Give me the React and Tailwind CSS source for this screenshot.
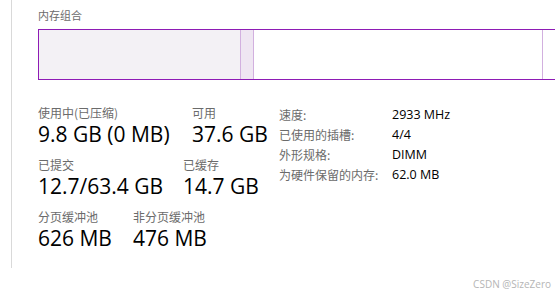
export default function App() {
  const lbl = "text-[12px] leading-[16px] text-[#6b6b6b] font-['Noto_Sans_CJK_SC',sans-serif]";
  const val = "text-[21px] leading-[26px] text-black";
  return (
    <div className="w-[555px] h-[300px] bg-white relative overflow-hidden font-['Open_Sans','Noto_Sans_CJK_SC',sans-serif]">
      <div className="absolute left-[11px] top-0 h-[268px] w-px bg-[#d9d9d9]" />
      <div className="pl-[38px] pt-[8px]">
        <div className="text-[11px] leading-[14px] text-[#6b6b6b] font-['Noto_Sans_CJK_SC',sans-serif]">内存组合</div>
        <div className="mt-[7px] h-[51px] border border-[#8e1bb5] border-r-0 flex">
          <div className="w-[202px] bg-[#f3f1f5] border-r border-[#d2b0df]" />
          <div className="w-[13px] bg-[#efe6f2] border-r border-[#d2b0df]" />
          <div className="w-[289px] border-r border-[#d2b0df]" />
          <div className="flex-1" />
        </div>
        <div className="mt-[25px] flex">
          <div className="w-[241px]">
            <div className="flex">
              <div className="w-[154px]">
                <div className={lbl}>使用中(已压缩)</div>
                <div className={val}>9.8 GB (0 MB)</div>
              </div>
              <div>
                <div className={lbl}>可用</div>
                <div className={val}>37.6 GB</div>
              </div>
            </div>
            <div className="flex mt-[10px]">
              <div className="w-[145px]">
                <div className={lbl}>已提交</div>
                <div className={val}>12.7/63.4 GB</div>
              </div>
              <div>
                <div className={lbl}>已缓存</div>
                <div className={val}>14.7 GB</div>
              </div>
            </div>
            <div className="flex mt-[10px]">
              <div className="w-[95px]">
                <div className={lbl}>分页缓冲池</div>
                <div className={val}>626 MB</div>
              </div>
              <div>
                <div className={lbl}>非分页缓冲池</div>
                <div className={val}>476 MB</div>
              </div>
            </div>
          </div>
          <div className="text-[12.5px] leading-[20px]">
            {[
              ['速度:', '2933 MHz'],
              ['已使用的插槽:', '4/4'],
              ['外形规格:', 'DIMM'],
              ['为硬件保留的内存:', '62.0 MB'],
            ].map(([k, v]) => (
              <div key={k} className="flex">
                <div className="w-[113px] text-[12px] text-[#6b6b6b] font-['Noto_Sans_CJK_SC',sans-serif]">{k}</div>
                <div className="text-black">{v}</div>
              </div>
            ))}
          </div>
        </div>
      </div>
      <div className="absolute right-[4px] bottom-[10px] text-[10px] leading-[12px] text-[#b5b5b5]">CSDN @SizeZero</div>
    </div>
  );
}
